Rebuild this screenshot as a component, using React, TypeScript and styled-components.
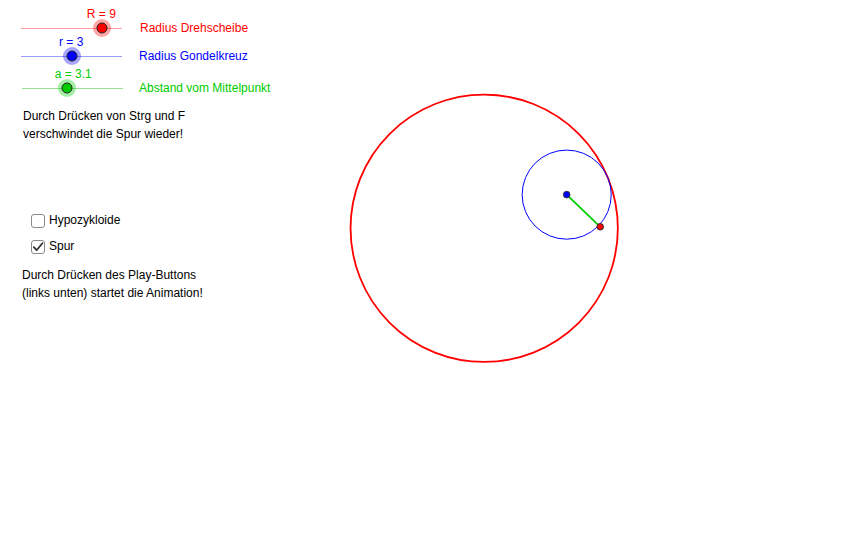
import React from "react";
import styled, { createGlobalStyle } from "styled-components";

const GlobalStyle = createGlobalStyle`
  html, body {
    margin: 0;
    padding: 0;
    background: #ffffff;
  }
  body {
    font-family: "Liberation Sans", Arial, sans-serif;
    font-size: 12px;
    color: #000000;
  }
`;

const Applet = styled.div`
  display: flex;
  width: 863px;
  height: 547px;
  background: #ffffff;
  overflow: hidden;
`;

const Panel = styled.div`
  display: flex;
  flex-direction: column;
  width: 300px;
  flex-shrink: 0;
  padding: 14px 0 0 21px;
  box-sizing: border-box;
`;

const SliderRow = styled.div<{ $top: number; $shift: number }>`
  display: flex;
  align-items: center;
  height: 28px;
  margin-top: ${(p) => p.$top}px;
  padding-left: ${(p) => p.$shift}px;
`;

const Track = styled.div<{ $line: string }>`
  position: relative;
  width: 101px;
  height: 1px;
  background: ${(p) => p.$line};
  flex-shrink: 0;
`;

const Thumb = styled.div<{ $fill: string; $halo: string }>`
  position: absolute;
  top: 0;
  width: 11px;
  height: 11px;
  box-sizing: border-box;
  border-radius: 50%;
  border: 1px solid #202020;
  background: ${(p) => p.$fill};
  box-shadow: 0 0 0 3.5px ${(p) => p.$halo};
  transform: translate(-50%, -50%);
`;

const ValueLabel = styled.span<{ $color: string }>`
  position: absolute;
  top: -21px;
  line-height: 14px;
  white-space: nowrap;
  color: ${(p) => p.$color};
`;

const Caption = styled.span<{ $color: string; $gap: number }>`
  margin-left: ${(p) => p.$gap}px;
  color: ${(p) => p.$color};
  white-space: nowrap;
`;

const Note = styled.p<{ $top: number; $indent: number }>`
  margin: ${(p) => p.$top}px 0 0 ${(p) => p.$indent}px;
  line-height: 18px;
`;

const CheckRow = styled.label<{ $top: number }>`
  display: flex;
  align-items: center;
  gap: 4px;
  height: 26px;
  margin-top: ${(p) => p.$top}px;
  padding-left: 10px;
  line-height: 14px;
`;

const Box = styled.span`
  display: flex;
  align-items: center;
  justify-content: center;
  width: 14px;
  height: 14px;
  box-sizing: border-box;
  border: 1px solid #8a8a8a;
  border-radius: 3px;
  background: #ffffff;
`;

const CheckText = styled.span`
  position: relative;
  top: -1px;
`;

const Graphics = styled.svg`
  display: block;
  flex-shrink: 0;
`;

type SliderProps = {
  name: string;
  value: string;
  fraction: number;
  labelDx: number;
  color: string;
  line: string;
  halo: string;
  caption: string;
  top: number;
  shift: number;
  gap: number;
};

const Slider = ({ name, value, fraction, labelDx, color, line, halo, caption, top, shift, gap }: SliderProps) => {
  const x = fraction * 101;
  return (
    <SliderRow $top={top} $shift={shift}>
      <Track $line={line}>
        <ValueLabel $color={color} style={{ left: x + labelDx }}>
          {name} = {value}
        </ValueLabel>
        <Thumb $fill={color} $halo={halo} style={{ left: x }} />
      </Track>
      <Caption $color={color} $gap={gap}>
        {caption}
      </Caption>
    </SliderRow>
  );
};

const Check = ({ checked, label, top }: { checked: boolean; label: string; top: number }) => (
  <CheckRow $top={top}>
    <Box>
      {checked && (
        <svg width="12" height="12" viewBox="0 0 12 12">
          <path d="M1.8 6.2 L4.6 9.2 L10.4 2.2" fill="none" stroke="#333" strokeWidth="1.8" strokeLinecap="round" strokeLinejoin="round" />
        </svg>
      )}
    </Box>
    <CheckText>{label}</CheckText>
  </CheckRow>
);

const GREEN = "#00cc00";

export default function App() {
  // Drehscheibe: Mittelpunkt und Radius in Pixeln
  const cx = 484.2;
  const cy = 228.3;
  const unit = 14.85;
  const R = 9 * unit;
  const r = 3 * unit;
  const angle = (22.2 * Math.PI) / 180;
  const gx = cx + (R - r) * Math.cos(angle);
  const gy = cy - (R - r) * Math.sin(angle);
  const px = 600.2;
  const py = 226.8;

  return (
    <>
      <GlobalStyle />
      <Applet>
        <Panel>
          <Slider
            name="R"
            value="9"
            fraction={0.8}
            labelDx={-15}
            color="#ff0000"
            line="#ff9a9a"
            halo="rgba(255,0,0,0.35)"
            caption="Radius Drehscheibe"
            top={0}
            shift={0}
            gap={18}
          />
          <Slider
            name="r"
            value="3"
            fraction={0.5}
            labelDx={-12.5}
            color="#0000ff"
            line="#9a9aff"
            halo="rgba(0,0,255,0.35)"
            caption="Radius Gondelkreuz"
            top={0}
            shift={0}
            gap={17}
          />
          <Slider
            name="a"
            value="3.1"
            fraction={0.443}
            labelDx={-12}
            color={GREEN}
            line="#96e296"
            halo="rgba(0,204,0,0.35)"
            caption="Abstand vom Mittelpunkt"
            top={4}
            shift={1}
            gap={16}
          />
          <Note $top={5} $indent={2}>
            Durch Drücken von Strg und F
            <br />
            verschwindet die Spur wieder!
          </Note>
          <Check checked={false} label="Hypozykloide" top={65} />
          <Check checked label="Spur" top={0} />
          <Note $top={6} $indent={1}>
            Durch Drücken des Play-Buttons
            <br />
            (links unten) startet die Animation!
          </Note>
        </Panel>
        <Graphics width={563} height={547} viewBox="300 0 563 547">
          <circle cx={cx} cy={cy} r={R} fill="none" stroke="#ff0000" strokeWidth={1.8} />
          <circle cx={gx} cy={gy} r={r} fill="none" stroke="#0000ff" strokeWidth={1} />
          <line x1={gx} y1={gy} x2={px} y2={py} stroke={GREEN} strokeWidth={1.8} />
          <circle cx={gx} cy={gy} r={3.3} fill="#0000ff" stroke="#333" strokeWidth={1} />
          <circle cx={px} cy={py} r={3.3} fill="#ff0000" stroke="#333" strokeWidth={1} />
        </Graphics>
      </Applet>
    </>
  );
}
